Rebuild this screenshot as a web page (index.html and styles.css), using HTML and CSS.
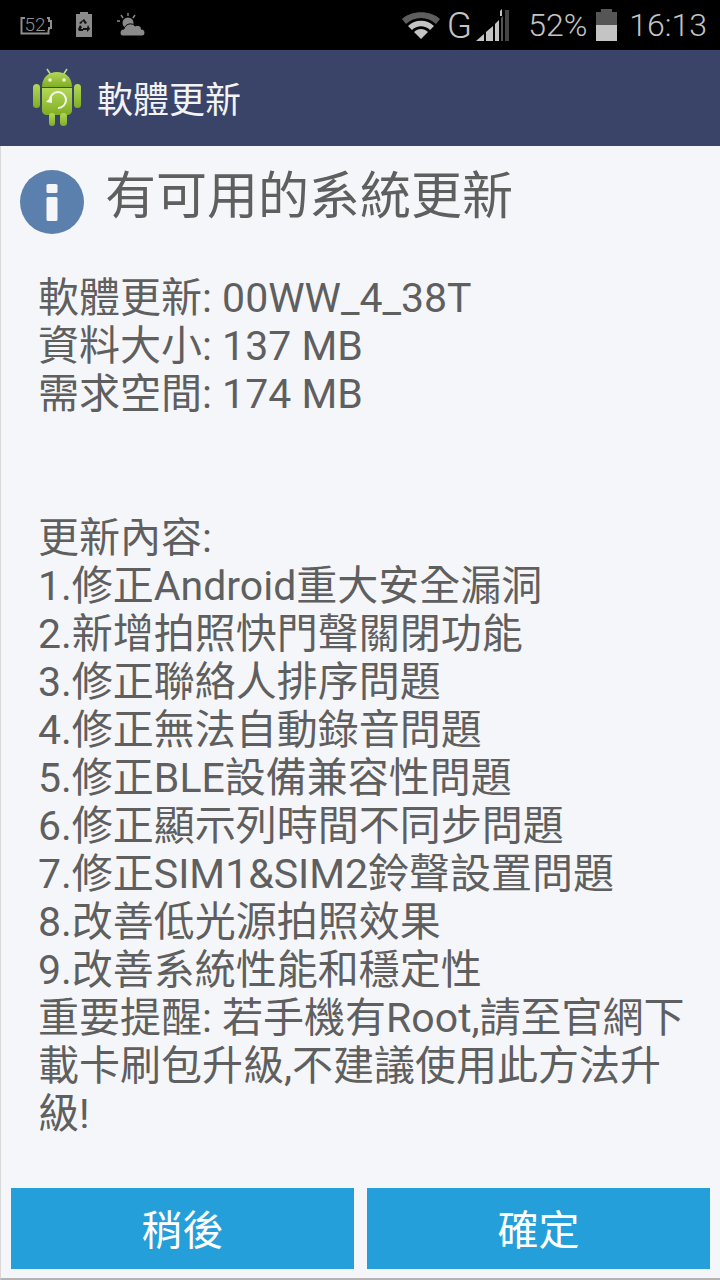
FILE: index.html
```html
<!DOCTYPE html>
<html>
  <head>
    <title>軟體更新</title>
    <meta charset="utf-8">
    <link rel="stylesheet" href="styles.css">
  </head>
  <body>
    <div class="statusbar">
      <div class="status-left">
        <svg class="ic-batt52" width="32" height="26" viewBox="0 0 32 26">
          <path d="M5 6H1.500V21.500H28.500V18" fill="none" stroke="#8e8e8e" stroke-width="2"/>
          <path d="M27 6H29V9H31V16H29V18" fill="none" stroke="#8e8e8e" stroke-width="2"/>
          <text x="15" y="19" class="batt-num">52</text>
        </svg>
        <svg class="ic-recycle" width="18" height="26" viewBox="0 0 18 26">
          <path d="M5 0H13V2H17V25H1V2H5Z" fill="#8a8a8a"/>
          <path d="M9 7L12 11L10 12L8 9L6 12L4 11ZM13 13L15 17L12 20V18H8V16H12ZM5 13L7 15L6 17H8V19H4L3 17Z" fill="#111"/>
        </svg>
        <svg class="ic-weather" width="30" height="26" viewBox="0 0 30 26">
          <g stroke="#8a8a8a" stroke-width="1.400">
            <path d="M12 1V4M5 3L7 6M19 3L17 6M1 9H4"/>
          </g>
          <circle cx="12" cy="11" r="5.500" fill="#8a8a8a"/>
          <path d="M7 24C3 24 3 17 8 17C9 12 16 10 19 14C24 12 26 16 25 17C30 17 30 24 26 24Z" fill="#8a8a8a" stroke="#000" stroke-width="1"/>
        </svg>
      </div>
      <div class="status-right">
        <svg class="ic-wifi" width="40" height="28" viewBox="0 0 40 28">
          <path d="M1 8C10 -1 30 -1 39 8L35 13C27 5 13 5 5 13Z" fill="#5e5e5e"/>
          <path d="M7 15C14 8 26 8 33 15L29 19C24 14 16 14 11 19Z" fill="#c4c4c4"/>
          <path d="M13 21C17 17 23 17 27 21L20 28Z" fill="#c4c4c4"/>
        </svg>
        <span class="net-type">G</span>
        <svg class="ic-signal" width="34" height="32" viewBox="0 0 34 32">
          <path d="M0 32L8 25V32Z" fill="#c4c4c4"/>
          <path d="M10 23L17 17V32H10Z" fill="#c4c4c4"/>
          <path d="M19 15L23 11V32H19Z" fill="#c4c4c4"/>
          <path d="M25 9L27 7V32H25Z" fill="#555"/>
          <path d="M29 1H33V32H29Z" fill="#444"/>
          <path d="M24 2L26 0V7H24Z" fill="#c4c4c4"/>
        </svg>
        <span class="batt-text">52%</span>
        <div class="battery">
          <div class="battery-cap"></div>
          <div class="battery-body"><div class="battery-fill"></div></div>
        </div>
        <span class="clock">16:13</span>
      </div>
    </div>

    <div class="appbar">
      <svg class="app-icon" width="50" height="60" viewBox="0 0 50 60">
        <defs>
          <linearGradient id="droid" x1="0" y1="0" x2="0" y2="1">
            <stop offset="0" stop-color="#b4d75a"/>
            <stop offset="1" stop-color="#7fae22"/>
          </linearGradient>
        </defs>
        <path d="M15 2L19 8M35 2L31 8" stroke="#c8dc8c" stroke-width="1.500"/>
        <path d="M10 20C10 10 17 5 25 5C33 5 40 10 40 20Z" fill="url(#droid)"/>
        <circle cx="18" cy="13" r="1.800" fill="#f2f6dc"/>
        <circle cx="32" cy="13" r="1.800" fill="#f2f6dc"/>
        <path d="M10 21H40V43C40 46 38 48 35 48H15C12 48 10 46 10 43Z" fill="url(#droid)"/>
        <rect x="1" y="17" width="7" height="24" rx="3.500" fill="url(#droid)"/>
        <rect x="42" y="17" width="7" height="24" rx="3.500" fill="url(#droid)"/>
        <rect x="17" y="46" width="6" height="13" rx="3" fill="url(#droid)"/>
        <rect x="28" y="46" width="7" height="13" rx="3.500" fill="url(#droid)"/>
        <path d="M18 33A8 8 0 1 1 26 41" fill="none" stroke="#f4f6ea" stroke-width="2"/>
        <path d="M14 35L20 29V36Z" fill="#f4f6ea"/>
      </svg>
      <span class="app-title">軟體更新</span>
    </div>

    <div class="content">
      <div class="dialog-head">
        <svg class="info-icon" width="64" height="64" viewBox="0 0 64 64">
          <circle cx="32" cy="32" r="32" fill="#5b80ad"/>
          <rect x="26.500" y="14" width="11" height="9" rx="1.500" fill="#f5f6f9"/>
          <rect x="26.500" y="27" width="11" height="24" rx="1.500" fill="#f5f6f9"/>
        </svg>
        <h1 class="dialog-title">有可用的系統更新</h1>
      </div>
      <div class="message">
        軟體更新: 00WW_4_38T<br>
        資料大小: 137 MB<br>
        需求空間: 174 MB<br>
        <br>
        <br>
        更新內容:<br>
        1.修正Android重大安全漏洞<br>
        2.新增拍照快門聲關閉功能<br>
        3.修正聯絡人排序問題<br>
        4.修正無法自動錄音問題<br>
        5.修正BLE設備兼容性問題<br>
        6.修正顯示列時間不同步問題<br>
        7.修正SIM1&amp;SIM2鈴聲設置問題<br>
        8.改善低光源拍照效果<br>
        9.改善系統性能和穩定性<br>
        重要提醒: 若手機有Root,請至官網下<br>
        載卡刷包升級,不建議使用此方法升<br>
        級!
      </div>
      <div class="actions">
        <div class="btn">稍後</div>
        <div class="btn">確定</div>
      </div>
    </div>
  </body>
</html>
```

FILE: styles.css
```css
* {
  box-sizing: border-box;
}

html, body {
  margin: 0;
  padding: 0;
}

body {
  width: 720px;
  height: 1280px;
  display: flex;
  flex-direction: column;
  overflow: hidden;
  background-color: #f5f6f9;
  font-family: Roboto, "Noto Sans CJK TC", sans-serif;
}

.statusbar {
  display: flex;
  justify-content: space-between;
  align-items: center;
  height: 50px;
  padding: 0 13px 0 20px;
  background-color: #000;
  color: #c4c4c4;
}

.status-left {
  display: flex;
  align-items: center;
  gap: 23px;
}

.batt-num {
  font-size: 19px;
  font-weight: 300;
  fill: #8e8e8e;
  text-anchor: middle;
}

.status-right {
  display: flex;
  align-items: center;
  font-size: 32px;
  font-weight: 300;
}

.ic-wifi {
  margin: 0 6px 0 0;
}

.net-type {
  font-size: 37px;
}

.ic-signal {
  margin: 0 18px 0 4px;
}

.battery {
  display: flex;
  flex-direction: column;
  align-items: center;
  width: 21px;
  height: 32px;
  margin: 0 12px 0 9px;
}

.battery-cap {
  width: 11px;
  height: 3px;
  background-color: #555;
}

.battery-body {
  flex: 1;
  display: flex;
  align-items: flex-end;
  width: 100%;
  background-color: #555;
}

.battery-fill {
  width: 100%;
  height: 16px;
  background-color: #c4c4c4;
}

.appbar {
  display: flex;
  align-items: center;
  gap: 15px;
  height: 96px;
  padding: 0 0 3px 32px;
  background-color: #3a4468;
}

.app-title {
  font-size: 36px;
  color: #f2f3f6;
}

.content {
  flex: 1;
  display: flex;
  flex-direction: column;
  border-left: 1px solid #d8d8d8;
  border-bottom: 2px solid #b4b4b4;
}

.dialog-head {
  display: flex;
  align-items: flex-start;
  gap: 21px;
  padding: 24px 0 0 19px;
}

.dialog-title {
  margin: 0;
  font-size: 51px;
  font-weight: 400;
  line-height: 54px;
  color: #5f5f5f;
}

.message {
  flex: 1;
  padding: 40px 0 0 37px;
  font-size: 41px;
  line-height: 48px;
  color: #5f5f5f;
}

.actions {
  display: flex;
  gap: 13px;
  padding: 0 10px 9px 10px;
}

.btn {
  flex: 1;
  display: flex;
  justify-content: center;
  align-items: center;
  height: 81px;
  padding-bottom: 3px;
  background-color: #259fd9;
  font-size: 41px;
  color: #fff;
}
```
